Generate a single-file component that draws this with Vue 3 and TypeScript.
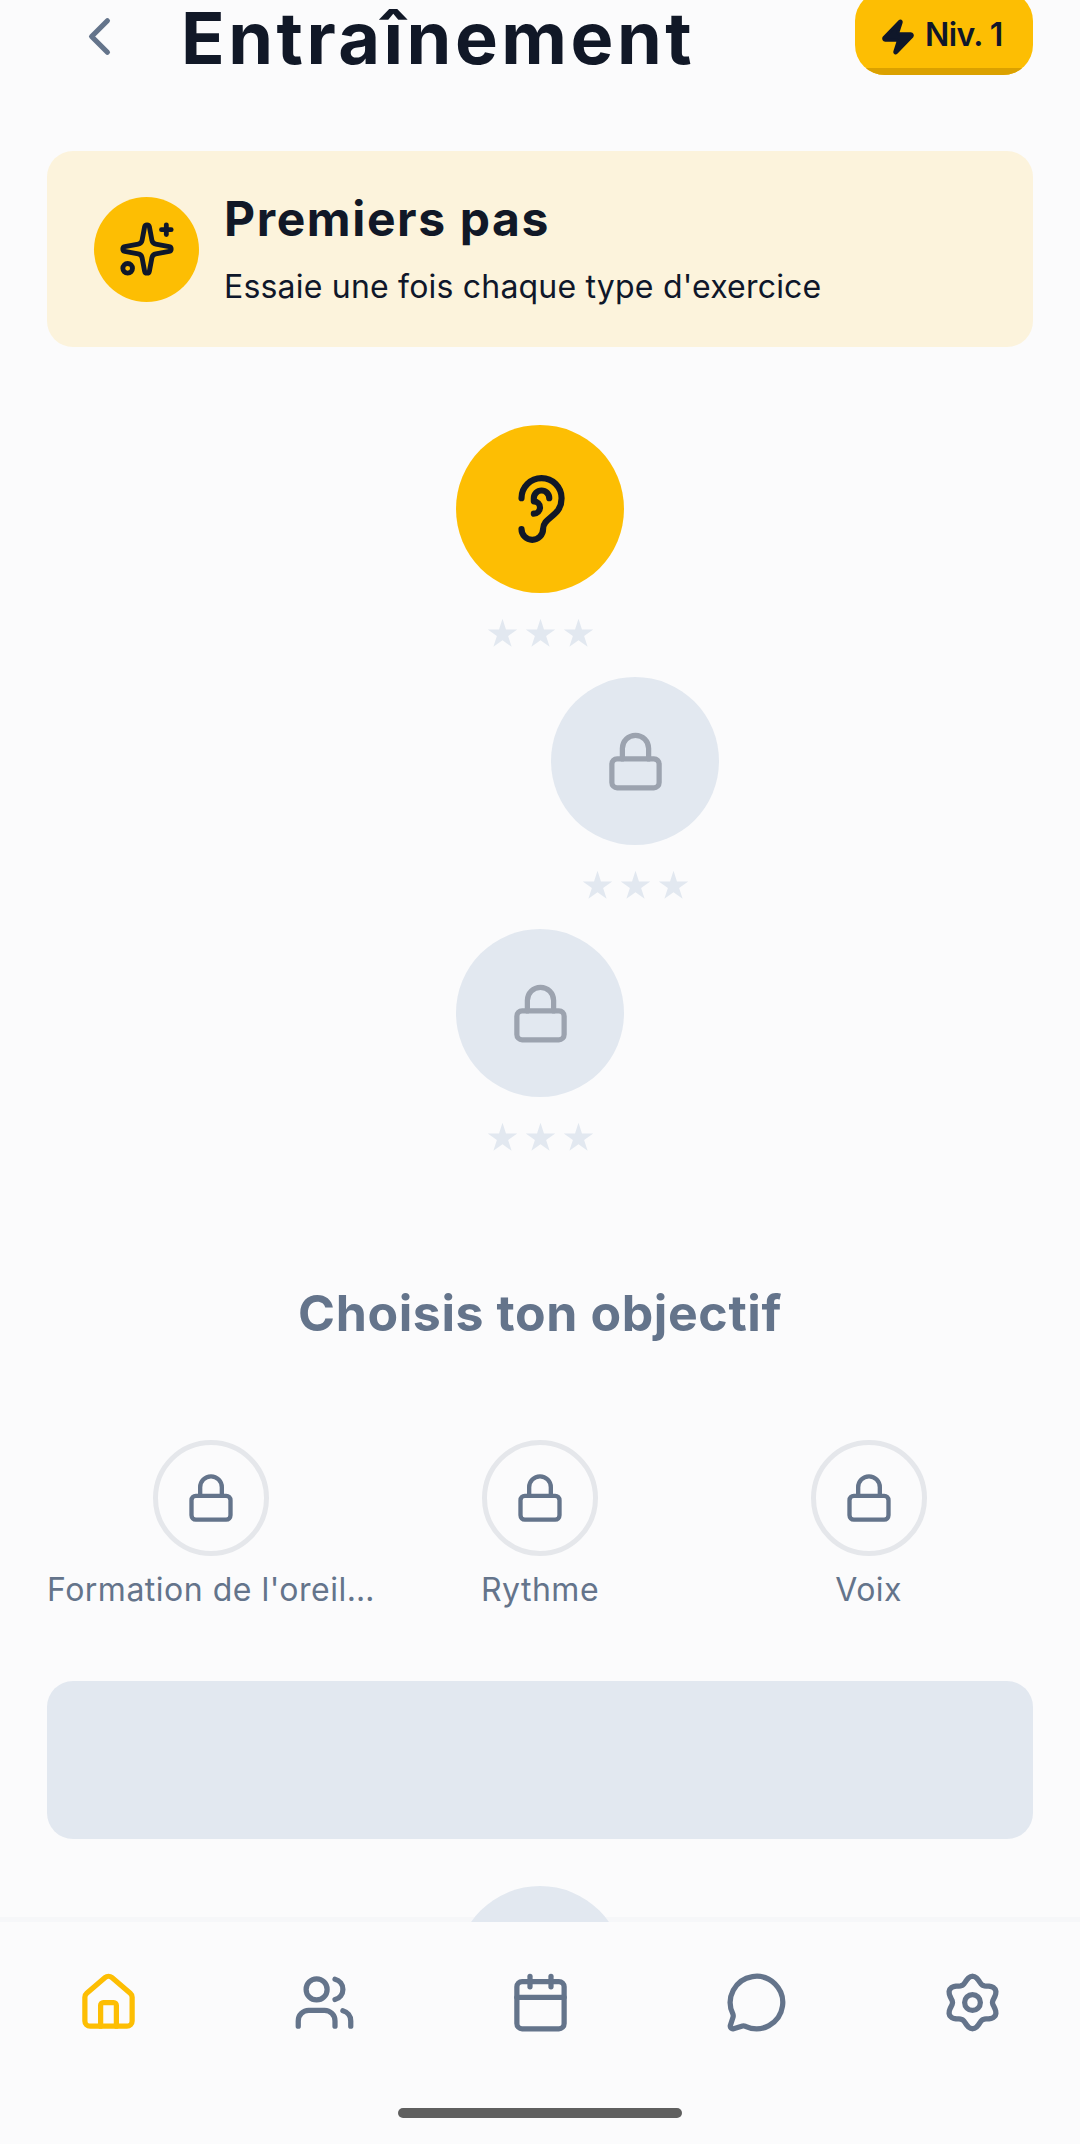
<template>
  <div class="screen">
    <div class="scroll">
      <header class="top">
        <svg class="back" viewBox="0 0 24 24"><path d="m15 18-6-6 6-6" /></svg>
        <h1 class="title">Entraînement</h1>
        <div class="level">
          <svg class="zap" viewBox="0 0 24 24">
            <path d="M4 14a1 1 0 0 1-.78-1.63l9.9-10.2a.5.5 0 0 1 .86.46l-1.92 6.02A1 1 0 0 0 13 10h7a1 1 0 0 1 .78 1.63l-9.9 10.2a.5.5 0 0 1-.86-.46l1.92-6.02A1 1 0 0 0 11 14z" />
          </svg>
          <span class="level-text">Niv. 1</span>
        </div>
      </header>

      <section class="banner">
        <div class="banner-icon">
          <svg viewBox="0 0 24 24">
            <path d="M11.017 2.814a1 1 0 0 1 1.966 0l1.051 5.558a2 2 0 0 0 1.594 1.594l5.558 1.051a1 1 0 0 1 0 1.966l-5.558 1.051a2 2 0 0 0-1.594 1.594l-1.051 5.558a1 1 0 0 1-1.966 0l-1.051-5.558a2 2 0 0 0-1.594-1.594l-5.558-1.051a1 1 0 0 1 0-1.966l5.558-1.051a2 2 0 0 0 1.594-1.594z" />
            <path d="M20 2v4" />
            <path d="M22 4h-4" />
            <circle cx="4" cy="20" r="2" />
          </svg>
        </div>
        <div>
          <div class="banner-title">Premiers pas</div>
          <div class="banner-sub">Essaie une fois chaque type d'exercice</div>
        </div>
      </section>

      <div class="path">
        <div v-for="(n, i) in nodes" :key="i" class="step" :style="{ marginLeft: n.shift + 'px' }">
          <div class="node" :class="{ open: n.open }">
            <svg v-if="n.open" class="ear" viewBox="0 0 24 24">
              <path d="M6 8.5a6.5 6.5 0 1 1 13 0c0 6-6 6-6 10a3.5 3.5 0 1 1-7 0" />
              <path d="M15 8.5a2.5 2.5 0 0 0-5 0v1a2 2 0 1 1 0 4" />
            </svg>
            <svg v-else class="lock" viewBox="0 0 24 24">
              <rect x="3" y="11" width="18" height="11" rx="2" />
              <path d="M7 11V7a5 5 0 0 1 10 0v4" />
            </svg>
          </div>
          <div class="stars">
            <svg v-for="s in 3" :key="s" viewBox="0 0 24 24">
              <polygon points="12,0.6 14.69,8.89 23.41,8.89 16.36,14.02 19.05,22.31 12,17.18 4.95,22.31 7.64,14.02 0.59,8.89 9.31,8.89" />
            </svg>
          </div>
        </div>
      </div>

      <h2 class="goals-title">Choisis ton objectif</h2>

      <div class="goals">
        <div v-for="g in goals" :key="g" class="goal">
          <div class="goal-ring">
            <svg viewBox="0 0 24 24">
              <rect x="3" y="11" width="18" height="11" rx="2" />
              <path d="M7 11V7a5 5 0 0 1 10 0v4" />
            </svg>
          </div>
          <div class="goal-label">{{ g }}</div>
        </div>
      </div>

      <div class="placeholder"></div>
      <div class="node next"></div>
    </div>

    <nav class="tabs">
      <div v-for="(t, i) in tabs" :key="i" class="tab" :class="{ active: i === 0 }">
        <svg viewBox="0 0 24 24">
          <path v-for="d in t.paths" :key="d" :d="d" />
          <circle v-if="t.circle" :cx="t.circle[0]" :cy="t.circle[1]" :r="t.circle[2]" />
          <rect v-if="t.rect" x="3" y="4" width="18" height="18" rx="2" />
        </svg>
      </div>
    </nav>
    <div class="home-bar"><span></span></div>
  </div>
</template>

<script setup lang="ts">
interface Tab {
  paths: string[]
  circle?: [number, number, number]
  rect?: boolean
}

const nodes = [
  { open: true, shift: 0 },
  { open: false, shift: 190 },
  { open: false, shift: 0 },
]

const goals = ['Formation de l\'oreille musicale', 'Rythme', 'Voix']

// six soft lobes, one pointing straight up
const gear = Array.from({ length: 72 }, (_, k) => {
  const a = (k * 5 * Math.PI) / 180
  const r = 8.8 - 1.2 * Math.cos(6 * a)
  const x = (12 + r * Math.cos(a)).toFixed(2)
  const y = (12 + r * Math.sin(a)).toFixed(2)
  return `${k ? 'L' : 'M'}${x} ${y}`
}).join('') + 'Z'

const tabs: Tab[] = [
  {
    paths: [
      'M15 21v-8a1 1 0 0 0-1-1h-4a1 1 0 0 0-1 1v8',
      'M3 10a2 2 0 0 1 .709-1.528l7-5.999a2 2 0 0 1 2.582 0l7 5.999A2 2 0 0 1 21 10v9a2 2 0 0 1-2 2H5a2 2 0 0 1-2-2z',
    ],
  },
  {
    paths: [
      'M16 21v-2a4 4 0 0 0-4-4H6a4 4 0 0 0-4 4v2',
      'M22 21v-2a4 4 0 0 0-3-3.87',
      'M16 3.13a4 4 0 0 1 0 7.75',
    ],
    circle: [9, 7, 4],
  },
  { paths: ['M8 2v4', 'M16 2v4', 'M3 10h18'], rect: true },
  {
    paths: [
      'M2.992 16.342a2 2 0 0 1 .094 1.167l-1.065 3.29a1 1 0 0 0 1.236 1.168l3.413-.998a2 2 0 0 1 1.099.092 10 10 0 1 0-4.777-4.719',
    ],
  },
  { paths: [gear], circle: [12, 12, 3] },
]
</script>

<style scoped>
.screen {
  width: 1080px;
  height: 2144px;
  display: flex;
  flex-direction: column;
  overflow: hidden;
  background: #fbfbfc;
  font-family: "Inter", "Noto Sans", sans-serif;
  color: #0f172a;
}

svg {
  fill: none;
  stroke: currentColor;
  stroke-width: 2;
  stroke-linecap: round;
  stroke-linejoin: round;
}

.scroll {
  flex: 1;
  min-height: 0;
  overflow: hidden;
  padding: 0 47px;
}

.top {
  height: 151px;
  display: flex;
  align-items: flex-start;
}

.back {
  width: 63px;
  height: 63px;
  margin: 5px 0 0 21px;
  color: #64748b;
}

.title {
  margin: 0 0 0 50px;
  flex: 1;
  font-size: 72px;
  line-height: 76px;
  font-weight: 700;
  letter-spacing: 3.5px;
  color: #111827;
}

.level {
  position: relative;
  height: 84px;
  width: 178px;
  box-sizing: border-box;
  margin-top: -9px;
  padding: 8px 0 0 24px;
  display: flex;
  align-items: center;
  gap: 8px;
  overflow: hidden;
  background: #fdbe03;
  border-radius: 30px;
  font-size: 32px;
  font-weight: 600;
  letter-spacing: -0.6px;
}

.level::after {
  content: "";
  position: absolute;
  left: 0;
  right: 0;
  bottom: 0;
  height: 7px;
  background: #dba100;
}

.level-text {
  margin-top: -6px;
}

.zap {
  width: 38px;
  height: 38px;
  fill: currentColor;
}

.banner {
  height: 196px;
  box-sizing: border-box;
  padding: 0 47px;
  display: flex;
  align-items: center;
  gap: 25px;
  background: #fcf3dc;
  border-radius: 26px;
}

.banner-icon {
  width: 105px;
  height: 105px;
  flex: none;
  display: flex;
  align-items: center;
  justify-content: center;
  border-radius: 50%;
  background: #fdbe03;
}

.banner-icon svg {
  width: 58px;
  height: 58px;
}

.banner-title {
  font-size: 48px;
  line-height: 58px;
  font-weight: 700;
  letter-spacing: 1.6px;
  color: #111827;
}

.banner-sub {
  margin-top: 18px;
  font-size: 32px;
  line-height: 42px;
  letter-spacing: 0.2px;
}

.path {
  margin-top: 78px;
  display: flex;
  flex-direction: column;
  gap: 27px;
}

.step {
  display: flex;
  flex-direction: column;
  align-items: center;
  gap: 25px;
}

.node {
  width: 168px;
  height: 168px;
  display: flex;
  align-items: center;
  justify-content: center;
  border-radius: 50%;
  background: #e2e8f0;
  color: #9ca3af;
}

.node.open {
  background: #fdbe03;
  color: #111827;
}

.ear {
  width: 74px;
  height: 74px;
}

.lock {
  width: 63px;
  height: 63px;
}

.stars {
  display: flex;
  gap: 7px;
  height: 32px;
}

.stars svg {
  width: 31px;
  height: 31px;
  fill: #e2e8f0;
  stroke: none;
}

.goals-title {
  margin: 129px 0 0;
  text-align: center;
  font-size: 50px;
  line-height: 60px;
  font-weight: 700;
  letter-spacing: 0.6px;
  color: #64748b;
}

.goals {
  margin-top: 97px;
  display: grid;
  grid-template-columns: repeat(3, 1fr);
}

.goal {
  min-width: 0;
  display: flex;
  flex-direction: column;
  align-items: center;
  gap: 13px;
}

.goal-ring {
  width: 116px;
  height: 116px;
  box-sizing: border-box;
  display: flex;
  align-items: center;
  justify-content: center;
  border: 5px solid #e5e7eb;
  border-radius: 50%;
  color: #64748b;
}

.goal-ring svg {
  width: 52px;
  height: 52px;
}

.goal-label {
  max-width: 100%;
  overflow: hidden;
  white-space: nowrap;
  text-overflow: ellipsis;
  font-size: 32px;
  line-height: 42px;
  letter-spacing: 0.5px;
  color: #64748b;
}

.placeholder {
  margin-top: 70px;
  height: 158px;
  background: #e2e8f0;
  border-radius: 26px;
}

.node.next {
  margin: 47px auto 0;
}

.tabs {
  position: relative;
  height: 163px;
  box-sizing: border-box;
  flex: none;
  margin-top: -5px;
  padding-top: 49px;
  display: flex;
  align-items: flex-start;
  border-top: 5px solid rgba(226, 232, 240, 0.22);
  background: #fbfbfc;
  background-clip: padding-box;
}

.tab {
  flex: 1;
  display: flex;
  justify-content: center;
  color: #64748b;
}

.tab.active {
  color: #fdbe03;
}

.tab svg {
  width: 63px;
  height: 63px;
}

.home-bar {
  position: relative;
  height: 64px;
  flex: none;
  display: flex;
  justify-content: center;
  background: #fbfbfc;
}

.home-bar span {
  width: 284px;
  height: 10px;
  margin-top: 28px;
  border-radius: 5px;
  background: #5f5f5f;
}
</style>
